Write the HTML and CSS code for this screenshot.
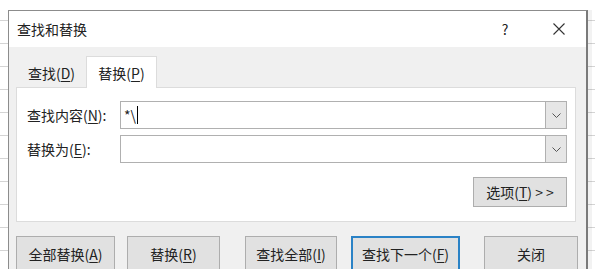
FILE: index.html
```html
<!DOCTYPE html>
<html lang="zh-CN">
<head>
    <meta charset="UTF-8">
    <title>查找和替换</title>
    <link rel="stylesheet" href="styles.css">
</head>
<body>
    <div class="sheet">
        <div class="dialog">
            <div class="titlebar">
                <span class="title">查找和替换</span>
                <span class="help">?</span>
                <svg class="close" width="12" height="12" viewBox="0 0 12 12">
                    <path d="M0.5 0.5 L11.5 11.5 M11.5 0.5 L0.5 11.5" stroke="#333" stroke-width="1.1" fill="none"/>
                </svg>
            </div>
            <div class="body">
                <div class="tabs">
                    <div class="tab">查找(<u>D</u>)</div>
                    <div class="tab active">替换(<u>P</u>)</div>
                </div>
                <div class="panel">
                    <div class="row">
                        <label class="label">查找内容(<u>N</u>):</label>
                        <div class="combo">
                            <span class="value">*\<span class="caret"></span></span>
                            <span class="drop">
                                <svg width="9" height="5" viewBox="0 0 9 5"><path d="M0.5 0.5 L4.5 4.5 L8.5 0.5" stroke="#555" fill="none"/></svg>
                            </span>
                        </div>
                    </div>
                    <div class="row">
                        <label class="label">替换为(<u>E</u>):</label>
                        <div class="combo">
                            <span class="value"></span>
                            <span class="drop">
                                <svg width="9" height="5" viewBox="0 0 9 5"><path d="M0.5 0.5 L4.5 4.5 L8.5 0.5" stroke="#555" fill="none"/></svg>
                            </span>
                        </div>
                    </div>
                    <div class="options">
                        <button class="btn">选项(<u>T</u>) &gt; &gt;</button>
                    </div>
                </div>
                <div class="actions">
                    <button class="btn act replace-all">全部替换(<u>A</u>)</button>
                    <button class="btn act replace">替换(<u>R</u>)</button>
                    <button class="btn act find-all">查找全部(<u>I</u>)</button>
                    <button class="btn act find-next">查找下一个(<u>F</u>)</button>
                    <button class="btn act close-btn">关闭</button>
                </div>
            </div>
        </div>
    </div>
</body>
</html>
```

FILE: styles.css
```css
body {
    margin: 0;
    font-family: "Noto Sans CJK SC", "Noto Sans", sans-serif;
    font-size: 14px;
    color: #222;
}
u {
    text-underline-offset: 2px;
}
.sheet {
    width: 595px;
    height: 269px;
    overflow: hidden;
    box-sizing: border-box;
    padding: 10px 0 0 8px;
    background: repeating-linear-gradient(#fff 0 20px, #d4d4d4 20px 21px, #fff 21px 23px);
}
.dialog {
    width: 580px;
    height: 280px;
    box-sizing: border-box;
    border: 1px solid #8c8c8c;
    border-right: 2px solid #7a7a7a;
    border-bottom: none;
    background: #f0f0f0;
    box-shadow: 4px 0 0 rgba(0, 0, 0, 0.05);
}
.titlebar {
    height: 36px;
    display: flex;
    align-items: center;
    padding-left: 8px;
    background: #fff;
}
.title {
    flex: 1;
}
.help {
    width: 8px;
    text-align: center;
    margin-right: 44px;
}
.close {
    margin-right: 21px;
}
.body {
    padding: 9px 0 0 7px;
}
.tabs {
    display: flex;
    align-items: flex-end;
    height: 31px;
    margin-left: 1px;
}
.tab {
    width: 69px;
    height: 29px;
    box-sizing: border-box;
    display: flex;
    align-items: center;
    justify-content: center;
}
.tab.active {
    width: 71px;
    height: 32px;
    margin-bottom: -1px;
    border: 1px solid #dcdcdc;
    border-bottom: none;
    background: #fff;
    position: relative;
}
.panel {
    width: 560px;
    box-sizing: border-box;
    border: 1px solid #dcdcdc;
    background: #fff;
    padding: 13px 8px 14px 10px;
}
.row {
    display: flex;
    align-items: center;
    height: 28px;
}
.row + .row {
    margin-top: 6px;
}
.label {
    width: 93px;
}
.combo {
    flex: 1;
    height: 28px;
    box-sizing: border-box;
    border: 1px solid #b0b0b0;
    display: flex;
}
.value {
    flex: 1;
    display: flex;
    align-items: center;
    padding-left: 3px;
}
.caret {
    display: inline-block;
    width: 1px;
    height: 18px;
    margin-left: 1px;
    background: #000;
}
.drop {
    width: 20px;
    border-left: 1px solid #b0b0b0;
    background: #e6e6e6;
    display: flex;
    align-items: center;
    justify-content: center;
}
.options {
    display: flex;
    justify-content: flex-end;
    margin-top: 14px;
}
.btn {
    height: 30px;
    width: 94px;
    box-sizing: border-box;
    border: 1px solid #adadad;
    background: #e1e1e1;
    font: inherit;
    color: #222;
    padding: 0;
}
.actions {
    display: flex;
    margin-top: 14px;
}
.act {
    height: 36px;
}
.replace-all {
    width: 99px;
}
.replace {
    width: 93px;
    margin-left: 12px;
}
.find-all {
    width: 92px;
    margin-left: 25px;
}
.find-next {
    width: 109px;
    margin-left: 14px;
    border: 2px solid #2a82c6;
}
.close-btn {
    width: 94px;
    margin-left: 24px;
}
```
